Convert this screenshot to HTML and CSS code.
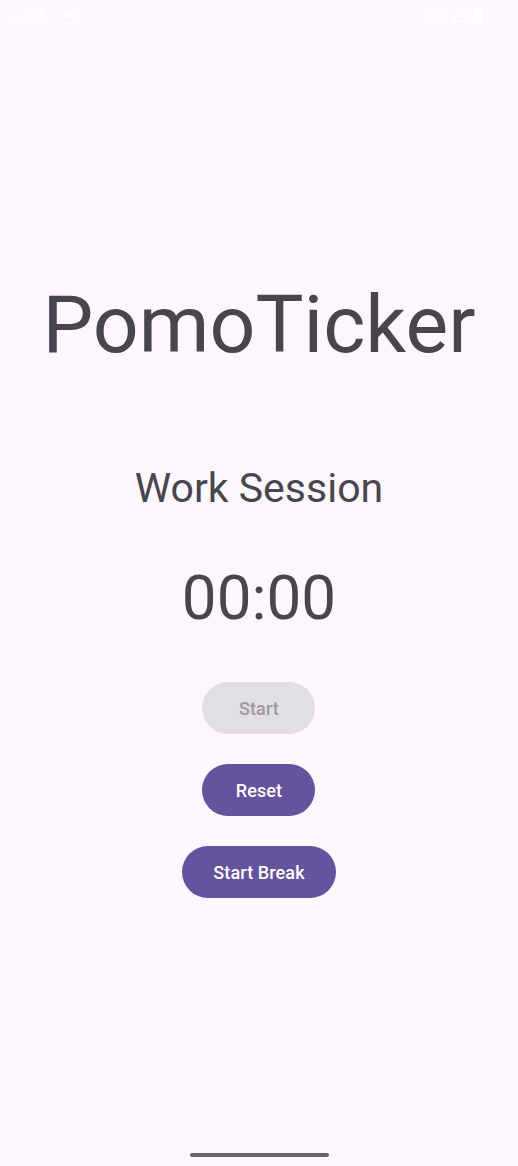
FILE: index.html
```html
<!DOCTYPE html>
<html>
<head>
<meta charset="utf-8">
<link rel="stylesheet" href="styles.css">
</head>
<body>
<div class="screen">
  <div class="status">
    <div class="status-left">
      <span class="clock">11:08</span>
      <svg class="cloud" width="10" height="6" viewBox="0 0 10 6"><path d="M2 6h6a2 2 0 0 0 0-4 3 3 0 0 0-5.6 1A1.5 1.5 0 0 0 2 6z" fill="#fff"/></svg>
    </div>
    <div class="status-right">
      <span class="net">5G</span>
      <svg width="14" height="14" viewBox="0 0 14 14"><path d="M13 1v12H1z" fill="none" stroke="#fff" stroke-width="1.3"/></svg>
      <svg width="9" height="15" viewBox="0 0 9 15"><rect x="3" y="0" width="3" height="2" fill="#fff"/><rect x="0" y="2" width="9" height="13" rx="1" fill="#fff"/></svg>
    </div>
  </div>
  <main class="content">
    <h1 class="title">PomoTicker</h1>
    <h2 class="session">Work Session</h2>
    <div class="timer">00:00</div>
    <div class="buttons">
      <button class="btn btn-disabled" disabled>Start</button>
      <button class="btn">Reset</button>
      <button class="btn">Start Break</button>
    </div>
  </main>
  <div class="nav"><div class="handle"></div></div>
</div>
</body>
</html>
```

FILE: styles.css
```css
html, body {
  margin: 0;
  padding: 0;
  background: #FDF8FD;
}
.screen {
  width: 518px;
  height: 1166px;
  display: flex;
  flex-direction: column;
  font-family: Roboto, "Noto Sans", sans-serif;
  color: #49454F;
  overflow: hidden;
}
.status {
  height: 30px;
  display: flex;
  justify-content: space-between;
  align-items: center;
  padding: 0 36px 0 8px;
  color: #fff;
  font-size: 14px;
}
.status-left, .status-right {
  display: flex;
  align-items: center;
  gap: 8px;
}
.status-left { gap: 20px; }
.clock { letter-spacing: 0.3px; }
.net { font-size: 13px; }
.content {
  display: flex;
  flex-direction: column;
  align-items: center;
  padding-top: 247px;
}
.title {
  margin: 0;
  font-size: 80.6px;
  font-weight: 400;
  line-height: normal;
}
.session {
  margin: 91.5px 0 0;
  font-size: 41px;
  font-weight: 400;
  line-height: normal;
}
.timer {
  margin-top: 49.5px;
  font-size: 62px;
  line-height: normal;
}
.buttons {
  margin-top: 48px;
  display: flex;
  flex-direction: column;
  align-items: center;
  gap: 30px;
}
.btn {
  min-width: 113px;
  height: 52px;
  padding: 0 31px;
  border: none;
  border-radius: 26px;
  background: #65539E;
  color: #fff;
  font-family: Roboto, "Noto Sans", sans-serif;
  font-size: 18px;
  font-weight: 500;
  letter-spacing: 0.1px;
}
.btn-disabled {
  background: #E2DFE4;
  color: #9C999F;
}
.nav {
  margin-top: auto;
  height: 13px;
  display: flex;
  justify-content: center;
}
.handle {
  width: 139px;
  height: 4px;
  border-radius: 2px;
  background: #666468;
}
```
